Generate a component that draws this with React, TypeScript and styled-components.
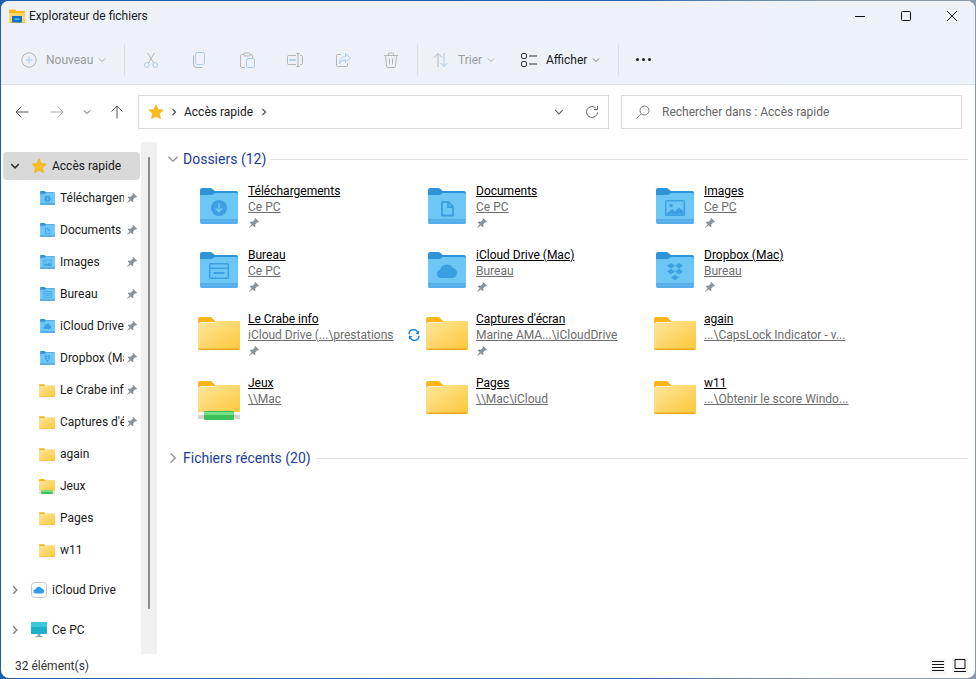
import React from 'react';
import styled, { createGlobalStyle } from 'styled-components';

const GlobalStyle = createGlobalStyle`
  html, body { margin: 0; padding: 0; height: 100%; overflow: hidden; }
  body {
    background: linear-gradient(90deg, #1d5fa8 0%, #2a62ad 65%, #5f86ac 75%, #8b9aa8 85%, #8b9aa8 100%);
    font-family: Roboto, "Noto Sans", sans-serif;
    font-size: 12px;
    color: #1a1a1a;
  }
`;

const Page = styled.div`
  width: 976px;
  height: 679px;
  padding: 1px;
  box-sizing: border-box;
`;

const Window = styled.div`
  height: 100%;
  display: flex;
  flex-direction: column;
  background: #fff;
  border-radius: 8px;
  overflow: hidden;
`;

const Head = styled.div`
  background: linear-gradient(90deg, #eef2f8 0%, #edf1f8 100%);
  border-bottom: 1px solid #dfe3e8;
`;

const TitleBar = styled.div`
  height: 34px;
  box-sizing: border-box;
  padding: 0 0 4px 8px;
  display: flex;
  align-items: center;
`;

const TitleText = styled.span`
  margin-left: 4px;
  flex: 1;
`;

const WinButton = styled.div`
  width: 46px;
  height: 30px;
  display: flex;
  align-items: center;
  justify-content: center;
`;

const Toolbar = styled.div`
  height: 49px;
  display: flex;
  align-items: center;
  padding-left: 12px;
`;

const ToolText = styled.span<{ $off?: boolean }>`
  color: ${({ $off }) => ($off ? '#9a9a9a' : '#1a1a1a')};
  margin-left: 4px;
  white-space: nowrap;
`;

const ToolMenu = styled.div<{ $w: number }>`
  width: ${({ $w }) => $w}px;
  display: flex;
  align-items: center;
  gap: 5px;
  padding-left: 8px;
  box-sizing: border-box;
`;

const ToolIcon = styled.div`
  width: 48px;
  display: flex;
  justify-content: center;
`;

const ToolSep = styled.div<{ $ml?: number; $mr?: number }>`
  width: 1px;
  height: 32px;
  background: #dcdfe4;
  margin: 0 ${({ $mr }) => $mr ?? 0}px 0 ${({ $ml }) => $ml ?? 0}px;
`;

const Dots = styled.div`
  display: flex;
  gap: 3px;
  margin-left: 17px;
  i {
    width: 3px;
    height: 3px;
    background: #222;
    border-radius: 50%;
  }
`;

const Nav = styled.div`
  height: 57px;
  box-sizing: border-box;
  padding: 10px 0 13px;
  display: flex;
  align-items: center;
  background: #fff;
`;

const NavBtn = styled.div<{ $w: number }>`
  width: ${({ $w }) => $w}px;
  display: flex;
  justify-content: center;
`;

const Field = styled.div`
  height: 34px;
  box-sizing: border-box;
  border: 1px solid #d9d9d9;
  display: flex;
  align-items: center;
`;

const AddressBar = styled(Field)`
  width: 471px;
  margin-left: 7px;
  padding: 0 9px;
`;

const CrumbArrow = styled.span`
  margin-left: 6px;
`;

const Crumb = styled.span`
  margin: 0 7px 0 6px;
`;

const Spacer = styled.div`
  flex: 1;
`;

const Refresh = styled.div`
  margin-left: 21px;
`;

const SearchBar = styled(Field)`
  width: 341px;
  margin-left: 12px;
  padding-left: 14px;
  gap: 12px;
  color: #666;
`;

const Main = styled.div`
  flex: 1;
  min-height: 0;
  display: flex;
`;

const Side = styled.div`
  width: 140px;
  box-sizing: border-box;
  padding: 10px 1px 0 2px;
  display: flex;
  flex-direction: column;
  gap: 4px;
  overflow: hidden;
`;

const SideRow = styled.div<{ $active?: boolean; $top?: boolean; $gap?: boolean }>`
  height: 28px;
  flex: none;
  display: flex;
  align-items: center;
  border-radius: 4px;
  background: ${({ $active }) => ($active ? '#d9d9d9' : 'transparent')};
  padding-left: ${({ $top }) => ($top ? '6px' : '36px')};
  margin-top: ${({ $gap }) => ($gap ? '8px' : '0')};
`;

const SideChevron = styled.div`
  width: 12px;
  display: flex;
  justify-content: center;
  margin-right: 10px;
`;

const SideIcon = styled.div<{ $blue?: boolean }>`
  width: 21px;
  box-sizing: border-box;
  padding-left: ${({ $blue }) => ($blue ? '1px' : '0')};
  flex: none;
  display: flex;
  align-items: center;
`;

const SideLabel = styled.span<{ $clip?: boolean }>`
  width: ${({ $clip }) => ($clip ? '64px' : 'auto')};
  overflow: hidden;
  white-space: nowrap;
  flex: none;
`;

const SidePin = styled.div`
  margin-left: 2px;
  display: flex;
`;

const ScrollTrack = styled.div`
  width: 16px;
  background: #f0f0f0;
  padding: 15px 0 45px 7px;
  box-sizing: border-box;
`;

const ScrollThumb = styled.div`
  width: 2px;
  height: 100%;
  background: #8a8a8a;
  border-radius: 1px;
`;

const Content = styled.div`
  flex: 1;
  padding: 7px 7px 0 10px;
  box-sizing: border-box;
`;

const Section = styled.div<{ $mt?: number }>`
  height: 20px;
  display: flex;
  align-items: center;
  margin-top: ${({ $mt }) => $mt ?? 0}px;
`;

const SectionChevron = styled.div`
  width: 16px;
  display: flex;
`;

const SectionTitle = styled.span`
  font-size: 14px;
  color: #1b3d9c;
  margin-right: 5px;
  white-space: nowrap;
`;

const SectionLine = styled.div`
  flex: 1;
  height: 1px;
  background: #e2e2e2;
`;

const Grid = styled.div`
  display: grid;
  grid-template-columns: repeat(3, 228px);
  grid-auto-rows: 64px;
  margin: 14px 0 0 31px;
`;

const Item = styled.div`
  display: flex;
`;

const ItemIcon = styled.div<{ $blue?: boolean }>`
  width: 50px;
  flex: none;
  padding-top: ${({ $blue }) => ($blue ? '5px' : '6px')};
  padding-left: ${({ $blue }) => ($blue ? '2px' : '0')};
  box-sizing: border-box;
`;

const ItemBody = styled.div`
  display: flex;
  flex-direction: column;
  line-height: 16px;
`;

const ItemName = styled.span`
  color: #000;
  text-decoration: underline;
  white-space: nowrap;
`;

const ItemSubRow = styled.div`
  display: flex;
  align-items: center;
  gap: 14px;
`;

const ItemSub = styled.span`
  color: #6d6d6d;
  text-decoration: underline;
  white-space: nowrap;
`;

const ItemPin = styled.div`
  height: 16px;
  display: flex;
  align-items: center;
`;

const Status = styled.div`
  height: 24px;
  display: flex;
  align-items: center;
  padding: 0 7px 0 14px;
  color: #333;
`;

const StatusBtn = styled.div`
  width: 16px;
  height: 16px;
  margin-left: 6px;
  display: flex;
  align-items: center;
  justify-content: center;
  background: #f6f6f6;
`;

const Svg: React.FC<{ s?: number; children: React.ReactNode }> = ({ s = 16, children }) => (
  <svg width={s} height={s} viewBox={`0 0 ${s} ${s}`} fill="none" style={{ display: 'block' }}>
    {children}
  </svg>
);

const Chevron: React.FC<{ dir: 'down' | 'right'; color?: string; size?: number; sw?: number }> = ({ dir, color = '#888', size = 8, sw = 1 }) => (
  <svg width={size} height={size} viewBox="0 0 8 8" fill="none" style={{ display: 'block' }}>
    <path d={dir === 'down' ? 'M1 2.5L4 5.5L7 2.5' : 'M2.5 1L5.5 4L2.5 7'} stroke={color} strokeWidth={sw} />
  </svg>
);

const Star: React.FC = () => (
  <svg width="16" height="16" viewBox="0 0 16 16" style={{ display: 'block' }}>
    <path d="M8 .8l2.2 4.7 5 .6-3.7 3.5 1 5.1L8 12.2l-4.5 2.5 1-5.1L.8 6.1l5-.6z" fill="#f9bd1c" stroke="#f1ab12" strokeWidth=".6" />
  </svg>
);

const PinIcon: React.FC = () => (
  <svg width="12" height="12" viewBox="0 0 16 16" style={{ display: 'block' }}>
    <path d="M9.8 1.2l5 5-1.2 1.1-1-.4-2.8 2.900.1 2.700-1.200 1.200-6.400-6.400 1.200-1.200 2.700.1 2.900-2.800-.4-1z" fill="#8c949b" />
    <path d="M4.6 9.6L1 15l5.400-3.600z" fill="#8c949b" />
  </svg>
);

type Glyph = 'down' | 'doc' | 'img' | 'desk' | 'cloud' | 'box';

const BlueGlyph: React.FC<{ g: Glyph }> = ({ g }) => {
  const c = '#3c9fe2';
  const bg = '#6cc6f6';
  switch (g) {
    case 'down':
      return (
        <>
          <circle cx="19" cy="20" r="8" fill={c} />
          <path d="M19 15.500v8M15.800 20.500l3.200 3.200 3.200-3.200" stroke={bg} strokeWidth="1.600" fill="none" />
        </>
      );
    case 'doc':
      return <path d="M14 14h6.500l4.500 4.500V27.500H14zM20 14v5h5" stroke={c} strokeWidth="1.800" fill="none" />;
    case 'img':
      return (
        <>
          <rect x="9" y="12" width="20" height="16" rx="1.500" fill={c} />
          <rect x="10.500" y="13.500" width="17" height="13" fill={bg} />
          <circle cx="15" cy="17.500" r="1.800" fill={c} />
          <path d="M10.500 25.500l5.500-4.500 3 2.500 4-4 4.500 4v3h-17z" fill={c} />
        </>
      );
    case 'desk':
      return (
        <>
          <rect x="9" y="11" width="20" height="16" rx="1.500" fill={c} />
          <rect x="10.500" y="12.500" width="17" height="3" fill={bg} />
          <rect x="10.500" y="17" width="17" height="8.500" fill={bg} />
          <rect x="13.500" y="20" width="11" height="2" fill={c} />
        </>
      );
    case 'cloud':
      return <path d="M13 26a4.200 4.200 0 0 1-.8-8.300A7 7 0 0 1 25 16a5.100 5.100 0 0 1-.5 10z" fill={c} />;
    default:
      return <path d="M15 11l4 2.700-4 2.700-4-2.700zM23 11l4 2.700-4 2.700-4-2.700zM15 16.800l4 2.700-4 2.700-4-2.700zM23 16.800l4 2.700-4 2.700-4-2.700zM19 22.800l4 2.700-4 2.700-4-2.700z" fill={c} />;
  }
};

const BlueFolder: React.FC<{ g: Glyph; w?: number; h?: number }> = ({ g, w = 38, h = 36 }) => (
  <svg width={w} height={h} viewBox="0 0 38 36" style={{ display: 'block' }}>
    <path d="M0 2a2 2 0 0 1 2-2h9l4 3h21a2 2 0 0 1 2 2v6H0z" fill="#2f93d6" />
    <path d="M0 8a1 1 0 0 1 1-1h10.500L15 5h21a2 2 0 0 1 2 2v27a2 2 0 0 1-2 2H2a2 2 0 0 1-2-2z" fill="#6cc6f6" />
    <path d="M0 31h38v3a2 2 0 0 1-2 2H2a2 2 0 0 1-2-2z" fill="#55ade9" />
    <path d="M0 33h38" stroke="#6cc0f2" strokeWidth=".6" />
    <BlueGlyph g={g} />
  </svg>
);

const YellowFolder: React.FC<{ w?: number; h?: number; drive?: boolean; id: string }> = ({ w = 42, h = 33, drive, id }) => (
  <svg width={w} height={h} viewBox={drive ? '0 0 42 39' : '0 0 42 33'} style={{ display: 'block' }}>
    <defs>
      <linearGradient id={id} x1="0" y1="0" x2="1" y2="1">
        <stop offset="0" stopColor="#fde79b" />
        <stop offset="1" stopColor="#fdc73a" />
      </linearGradient>
    </defs>
    <path d="M0 2a2 2 0 0 1 2-2h11l4 4h23a2 2 0 0 1 2 2v8H0z" fill="#fbb517" />
    <path d="M0 6h15l3-2h22a2 2 0 0 1 2 2v25a2 2 0 0 1-2 2H2a2 2 0 0 1-2-2z" fill={`url(#${id})`} />
    <path d="M1 6h15l1.500-1H2z" fill="#f4f1e6" />
    <path d="M0 31.500h42V31a2 2 0 0 1-2 2H2a2 2 0 0 1-2-2z" fill="#eeaa16" />
    {drive && (
      <>
        <rect x="0" y="31" width="42" height="7" fill="#d4d4ce" />
        <rect x="0" y="31" width="42" height="3" fill="#f6f6f2" />
        <rect x="6" y="30" width="30" height="9" rx="1" fill="#3cc05a" />
        <rect x="6" y="31" width="30" height="3" fill="#76e088" />
      </>
    )}
  </svg>
);

const Sync: React.FC = () => (
  <svg width="12" height="12" viewBox="0 0 12 12" fill="none" style={{ display: 'block' }}>
    <path d="M1 5.200A4.500 4.500 0 0 1 9.500 3L10.500 4" stroke="#1b86e0" strokeWidth="1.400" />
    <path d="M11 5.200V1.400L7.400 4.800z" fill="#1b86e0" />
    <path d="M11 6.800A4.500 4.500 0 0 1 2.500 9L1.500 8" stroke="#1b86e0" strokeWidth="1.400" />
    <path d="M1 6.800v3.800l3.600-3.400z" fill="#1b86e0" />
  </svg>
);

type Entry = { name: string; sub: string; pin?: boolean; glyph?: Glyph; sync?: boolean; drive?: boolean };

const entries: Entry[] = [
  { name: 'Téléchargements', sub: 'Ce PC', pin: true, glyph: 'down' },
  { name: 'Documents', sub: 'Ce PC', pin: true, glyph: 'doc' },
  { name: 'Images', sub: 'Ce PC', pin: true, glyph: 'img' },
  { name: 'Bureau', sub: 'Ce PC', pin: true, glyph: 'desk' },
  { name: 'iCloud Drive (Mac)', sub: 'Bureau', pin: true, glyph: 'cloud' },
  { name: 'Dropbox (Mac)', sub: 'Bureau', pin: true, glyph: 'box' },
  { name: 'Le Crabe info', sub: 'iCloud Drive (...\\prestations', pin: true, sync: true },
  { name: "Captures d'écran", sub: 'Marine AMA...\\iCloudDrive', pin: true },
  { name: 'again', sub: '...\\CapsLock Indicator - v...' },
  { name: 'Jeux', sub: '\\\\Mac', drive: true },
  { name: 'Pages', sub: '\\\\Mac\\iCloud' },
  { name: 'w11', sub: '...\\Obtenir le score Windo...' },
];

const App: React.FC = () => (
  <>
    <GlobalStyle />
    <Page>
      <Window>
        <Head>
          <TitleBar>
            <Svg s={16}>
              <path d="M0 2.500a1 1 0 0 1 1-1h5l1.500 1.500H15a1 1 0 0 1 1 1v10a1 1 0 0 1-1 1H1a1 1 0 0 1-1-1z" fill="#fbb517" />
              <path d="M0 5h16v8.500a1 1 0 0 1-1 1H1a1 1 0 0 1-1-1z" fill="#fdd66b" />
              <rect x="3" y="8" width="10" height="6.500" fill="#0f72c4" />
              <rect x="5.500" y="10.500" width="5" height="1.200" fill="#7cc4f5" />
            </Svg>
            <TitleText>Explorateur de fichiers</TitleText>
            <WinButton>
              <Svg s={12}><path d="M1 6.500h10" stroke="#111" /></Svg>
            </WinButton>
            <WinButton>
              <Svg s={12}><rect x="1.500" y="1.500" width="9" height="9" rx="1" stroke="#111" /></Svg>
            </WinButton>
            <WinButton>
              <Svg s={12}><path d="M1 1l10 10M11 1L1 11" stroke="#111" /></Svg>
            </WinButton>
          </TitleBar>
          <Toolbar>
            <ToolMenu $w={111}>
              <Svg s={16}>
                <circle cx="8" cy="8" r="7.200" stroke="#b3b3b3" />
                <path d="M8 4.500v7M4.500 8h7" stroke="#a8cbe8" />
              </Svg>
              <ToolText $off>Nouveau</ToolText>
              <Chevron dir="down" color="#aaa" />
            </ToolMenu>
            <ToolSep $mr={2} />
            <ToolIcon>
              <Svg s={16}>
                <path d="M4.500 1l6.200 10M11.500 1L5.300 11" stroke="#b5b5b5" />
                <circle cx="3.800" cy="13" r="2.400" stroke="#a5cdec" />
                <circle cx="12.200" cy="13" r="2.400" stroke="#a5cdec" />
              </Svg>
            </ToolIcon>
            <ToolIcon>
              <Svg s={16}>
                <rect x="4.500" y="0.500" width="9" height="12" rx="2" stroke="#a5cdec" />
                <path d="M2.500 3.500v9a3 3 0 0 0 3 3h6" stroke="#b5b5b5" />
              </Svg>
            </ToolIcon>
            <ToolIcon>
              <Svg s={16}>
                <path d="M5 2.500H3a1.500 1.500 0 0 0-1.500 1.500v10A1.500 1.500 0 0 0 3 15.500h3M11 2.500h1A1.500 1.500 0 0 1 13.500 4v2" stroke="#b5b5b5" />
                <rect x="5" y="1" width="6" height="3" rx="1" stroke="#b5b5b5" />
                <rect x="7.500" y="6.500" width="8" height="9" rx="1.500" stroke="#a5cdec" />
              </Svg>
            </ToolIcon>
            <ToolIcon>
              <Svg s={16}>
                <path d="M9 3.500H1.500a1 1 0 0 0-1 1v7a1 1 0 0 0 1 1H9M13 3.500h1.500a1 1 0 0 1 1 1v7a1 1 0 0 1-1 1H13M9.500 1.500H13M9.500 14.500H13M11 1.500v13" stroke="#b5b5b5" />
                <path d="M2.500 8h6" stroke="#a5cdec" strokeWidth="2" />
              </Svg>
            </ToolIcon>
            <ToolIcon>
              <Svg s={16}>
                <path d="M6 2.500H2.500a1 1 0 0 0-1 1v10a1 1 0 0 0 1 1h9a1 1 0 0 0 1-1V11" stroke="#b5b5b5" />
                <path d="M10.500 1.500l5 4.500-5 4.500V8C7.500 8 5.500 9.500 4.500 12c0-4.500 2.500-7.500 6-7.500z" stroke="#a5cdec" />
              </Svg>
            </ToolIcon>
            <ToolIcon>
              <Svg s={16}>
                <path d="M1 3.500h14M5.500 3.500V2a1 1 0 0 1 1-1h3a1 1 0 0 1 1 1v1.500M2.500 3.500l1 10.500a1.500 1.500 0 0 0 1.500 1.500h6a1.500 1.500 0 0 0 1.500-1.500l1-10.500M6.500 6.500v6M9.500 6.500v6" stroke="#b5b5b5" />
              </Svg>
            </ToolIcon>
            <ToolSep $ml={2} $mr={7} />
            <ToolMenu $w={88}>
              <Svg s={16}>
                <path d="M5 15V1.500M1 5.500l4-4 4 4" stroke="#b5b5b5" />
                <path d="M11 1v13.500M7.500 11l3.500 3.500 3.500-3.500" stroke="#a5cdec" />
              </Svg>
              <ToolText $off>Trier</ToolText>
              <Chevron dir="down" color="#aaa" />
            </ToolMenu>
            <ToolMenu $w={105}>
              <Svg s={16}>
                <rect x="0.500" y="1.500" width="5" height="5" rx="1.500" stroke="#333" />
                <rect x="0.500" y="9.500" width="5" height="5" rx="1.500" stroke="#333" />
                <path d="M8 4h8M8 12h8" stroke="#333" />
              </Svg>
              <ToolText>Afficher</ToolText>
              <Chevron dir="down" color="#777" />
            </ToolMenu>
            <ToolSep />
            <Dots><i /><i /><i /></Dots>
          </Toolbar>
        </Head>
        <Nav>
          <NavBtn $w={42}>
            <Svg s={14}><path d="M13.500 7H1M6.500 1.500L1 7l5.500 5.500" stroke="#555" /></Svg>
          </NavBtn>
          <NavBtn $w={28}>
            <Svg s={14}><path d="M.5 7H13M7.500 1.500L13 7l-5.500 5.500" stroke="#aaa" /></Svg>
          </NavBtn>
          <NavBtn $w={32}>
            <Chevron dir="down" color="#555" />
          </NavBtn>
          <NavBtn $w={28}>
            <Svg s={14}><path d="M7 13.500V1M1.500 6.500L7 1l5.500 5.500" stroke="#555" /></Svg>
          </NavBtn>
          <AddressBar>
            <Star />
            <CrumbArrow><Chevron dir="right" color="#555" sw={1.3} /></CrumbArrow>
            <Crumb>Accès rapide</Crumb>
            <Chevron dir="right" color="#555" sw={1.3} />
            <Spacer />
            <Chevron dir="down" color="#666" size={10} />
            <Refresh>
              <Svg s={14}>
                <path d="M12.500 7.500A5.500 5.500 0 1 1 10.800 3" stroke="#666" />
                <path d="M12.500 1v3.500H9" stroke="#666" />
              </Svg>
            </Refresh>
          </AddressBar>
          <SearchBar>
            <Svg s={14}>
              <circle cx="8.500" cy="5.500" r="4.500" stroke="#777" />
              <path d="M5 9l-4.500 4.500" stroke="#777" />
            </Svg>
            Rechercher dans : Accès rapide
          </SearchBar>
        </Nav>
        <Main>
          <Side>
            <SideRow $active $top>
              <SideChevron><Chevron dir="down" color="#333" size={10} sw={1.2} /></SideChevron>
              <SideIcon><Star /></SideIcon>
              <SideLabel>Accès rapide</SideLabel>
            </SideRow>
            {entries.map((e, i) => (
              <SideRow key={e.name}>
                <SideIcon $blue={!!e.glyph}>
                  {e.glyph
                    ? <BlueFolder g={e.glyph} w={15} h={14} />
                    : <YellowFolder id={`s${i}`} w={16} h={e.drive ? 15 : 13} drive={e.drive} />}
                </SideIcon>
                <SideLabel $clip>{e.name}</SideLabel>
                {e.pin && <SidePin><PinIcon /></SidePin>}
              </SideRow>
            ))}
            <SideRow $top $gap>
              <SideChevron><Chevron dir="right" color="#888" size={10} sw={1.2} /></SideChevron>
              <SideIcon>
                <Svg s={16}>
                  <rect x=".5" y=".5" width="15" height="15" rx="3" fill="#fff" stroke="#c8c8c8" />
                  <path d="M4.500 11.500a2 2 0 0 1-.2-4 3.500 3.500 0 0 1 6.500-1 2.600 2.600 0 0 1 .7 5z" fill="#2f9bf0" />
                </Svg>
              </SideIcon>
              <SideLabel>iCloud Drive</SideLabel>
            </SideRow>
            <SideRow $top $gap>
              <SideChevron><Chevron dir="right" color="#888" size={10} sw={1.2} /></SideChevron>
              <SideIcon>
                <Svg s={16}>
                  <rect x="0" y="0" width="16" height="12" rx="1" fill="#1fb0c9" />
                  <rect x="0" y="0" width="16" height="5" fill="#3cc8dc" />
                  <path d="M6.500 12h3v2h-3zM4.500 14h7v1h-7z" fill="#9aa4aa" />
                </Svg>
              </SideIcon>
              <SideLabel>Ce PC</SideLabel>
            </SideRow>
          </Side>
          <ScrollTrack><ScrollThumb /></ScrollTrack>
          <Content>
            <Section>
              <SectionChevron><Chevron dir="down" color="#999" size={12} /></SectionChevron>
              <SectionTitle>Dossiers (12)</SectionTitle>
              <SectionLine />
            </Section>
            <Grid>
              {entries.map((e, i) => (
                <Item key={e.name}>
                  <ItemIcon $blue={!!e.glyph}>
                    {e.glyph ? <BlueFolder g={e.glyph} /> : <YellowFolder id={`g${i}`} h={e.drive ? 39 : 33} drive={e.drive} />}
                  </ItemIcon>
                  <ItemBody>
                    <ItemName>{e.name}</ItemName>
                    <ItemSubRow>
                      <ItemSub>{e.sub}</ItemSub>
                      {e.sync && <Sync />}
                    </ItemSubRow>
                    {e.pin && <ItemPin><PinIcon /></ItemPin>}
                  </ItemBody>
                </Item>
              ))}
            </Grid>
            <Section $mt={9}>
              <SectionChevron><Chevron dir="right" color="#999" size={12} /></SectionChevron>
              <SectionTitle>Fichiers récents (20)</SectionTitle>
              <SectionLine />
            </Section>
          </Content>
        </Main>
        <Status>
          32 élément(s)
          <Spacer />
          <StatusBtn>
            <Svg s={14}><path d="M1 2.500h12M1 5.500h12M1 8.500h12M1 11.500h12" stroke="#111" /></Svg>
          </StatusBtn>
          <StatusBtn>
            <Svg s={14}><path d="M2 .5h10v9H2zM1 12.500h12" stroke="#111" /></Svg>
          </StatusBtn>
        </Status>
      </Window>
    </Page>
  </>
);

export default App;
